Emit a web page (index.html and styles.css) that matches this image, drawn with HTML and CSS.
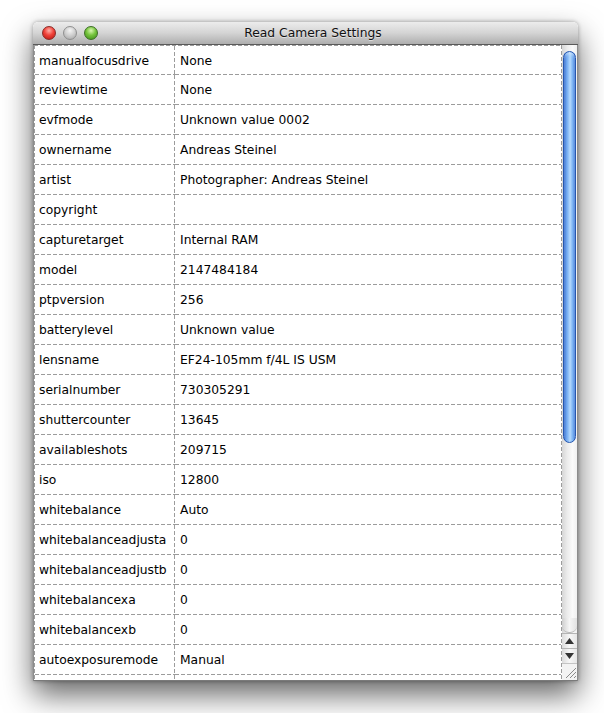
FILE: index.html
```html
<!DOCTYPE html>
<html>
<head>
<meta charset="utf-8">
<link rel="stylesheet" href="styles.css">
</head>
<body>
<div class="window">
  <div class="titlebar">
    <div class="lights">
      <span class="light red"></span>
      <span class="light gray"></span>
      <span class="light green"></span>
    </div>
    <div class="title">Read Camera Settings</div>
  </div>
  <div class="body">
    <div class="table">
      <div class="row"><div class="k">manualfocusdrive</div><div class="v">None</div></div>
      <div class="row"><div class="k">reviewtime</div><div class="v">None</div></div>
      <div class="row"><div class="k">evfmode</div><div class="v">Unknown value 0002</div></div>
      <div class="row"><div class="k">ownername</div><div class="v">Andreas Steinel</div></div>
      <div class="row"><div class="k">artist</div><div class="v">Photographer: Andreas Steinel</div></div>
      <div class="row"><div class="k">copyright</div><div class="v"></div></div>
      <div class="row"><div class="k">capturetarget</div><div class="v">Internal RAM</div></div>
      <div class="row"><div class="k">model</div><div class="v">2147484184</div></div>
      <div class="row"><div class="k">ptpversion</div><div class="v">256</div></div>
      <div class="row"><div class="k">batterylevel</div><div class="v">Unknown value</div></div>
      <div class="row"><div class="k">lensname</div><div class="v">EF24-105mm f/4L IS USM</div></div>
      <div class="row"><div class="k">serialnumber</div><div class="v">730305291</div></div>
      <div class="row"><div class="k">shuttercounter</div><div class="v">13645</div></div>
      <div class="row"><div class="k">availableshots</div><div class="v">209715</div></div>
      <div class="row"><div class="k">iso</div><div class="v">12800</div></div>
      <div class="row"><div class="k">whitebalance</div><div class="v">Auto</div></div>
      <div class="row"><div class="k">whitebalanceadjusta</div><div class="v">0</div></div>
      <div class="row"><div class="k">whitebalanceadjustb</div><div class="v">0</div></div>
      <div class="row"><div class="k">whitebalancexa</div><div class="v">0</div></div>
      <div class="row"><div class="k">whitebalancexb</div><div class="v">0</div></div>
      <div class="row"><div class="k">autoexposuremode</div><div class="v">Manual</div></div>
      <div class="row"><div class="k"></div><div class="v"></div></div>
    </div>
    <div class="scrollbar">
      <div class="track">
        <div class="thumb"></div>
        <div class="endcap"></div>
      </div>
      <div class="arrow up"><svg width="9" height="6" viewBox="0 0 9 6"><polygon points="4.5,0 9,6 0,6" fill="#333"/></svg></div>
      <div class="arrow down"><svg width="9" height="6" viewBox="0 0 9 6"><polygon points="0,0 9,0 4.5,6" fill="#333"/></svg></div>
      <div class="grip"><svg width="15" height="15" viewBox="0 0 15 15"><path d="M4 14 L14 4 M8 14 L14 8 M12 14 L14 12" stroke="#8a8a8a" stroke-width="1" fill="none"/></svg></div>
    </div>
  </div>
</div>
</body>
</html>
```

FILE: styles.css
```css
html, body {
  margin: 0;
  padding: 0;
  background: #fff;
}
body {
  font-family: "DejaVu Sans", "Liberation Sans", sans-serif;
  font-size: 12.3px;
  color: #000;
  min-height: 713px;
  padding-top: 22px;
  box-sizing: border-box;
}
.window {
  margin: 0 0 0 33px;
  width: 545px;
  height: 659px;
  border-radius: 5px 5px 0 0;
  box-shadow: 0 14px 30px rgba(0, 0, 0, 0.6), 0 0 4px rgba(0,0,0,0.35);
  display: flex;
  flex-direction: column;
  overflow: hidden;
  background: #fff;
}
.titlebar {
  height: 22px;
  flex: none;
  border-bottom: 1px solid #5a5a5a;
  background: linear-gradient(180deg, #ececec 0%, #d4d4d4 50%, #aeaeae 100%);
  display: flex;
  align-items: center;
  border-radius: 5px 5px 0 0;
}
.lights {
  display: flex;
  gap: 7px;
  padding-left: 9px;
  width: 56px;
  flex: none;
}
.light {
  width: 14px;
  height: 14px;
  border-radius: 50%;
  box-sizing: border-box;
}
.red {
  background: radial-gradient(circle at 50% 30%, #ffb0a8 0%, #f0433a 45%, #b3130d 100%);
  border: 1px solid #8b2a26;
}
.gray {
  background: radial-gradient(circle at 50% 30%, #f4f4f4 0%, #cdcdcd 50%, #a3a3a3 100%);
  border: 1px solid #8f8f8f;
}
.green {
  background: radial-gradient(circle at 50% 30%, #d9f7b0 0%, #76c43d 45%, #3b8a17 100%);
  border: 1px solid #3c6f24;
}
.title {
  flex: 1;
  text-align: center;
  padding-right: 50px;
  font-size: 12.3px;
  color: #111;
  text-shadow: 0 1px 0 rgba(255,255,255,0.5);
}
.body {
  flex: 1;
  display: flex;
  border-left: 1px solid #8c8c8c;
  border-right: 1px solid #8c8c8c;
  border-bottom: 1px solid #7a7a7a;
  overflow: hidden;
}
.table {
  width: 528px;
  flex: none;
  box-sizing: border-box;
  padding: 1px 1px 0 1px;
  background:
    repeating-linear-gradient(90deg, #9c9c9c 0 4px, transparent 4px 6px) left top / 100% 1px no-repeat,
    repeating-linear-gradient(180deg, #9c9c9c 0 4px, transparent 4px 6px) left top / 1px 100% no-repeat,
    repeating-linear-gradient(180deg, #9c9c9c 0 4px, transparent 4px 6px) right top / 1px 100% no-repeat;
  overflow: hidden;
}
.row {
  display: grid;
  grid-template-columns: 140px 386px;
  height: 30px;
  flex: none;
}
.row:first-child {
  height: 29px;
}
.k, .v {
  display: flex;
  align-items: center;
  white-space: nowrap;
  overflow: hidden;
  background: repeating-linear-gradient(90deg, #9c9c9c 0 4px, transparent 4px 6px) left bottom / 100% 1px no-repeat;
}
.k {
  padding-left: 4px;
  background:
    repeating-linear-gradient(90deg, #9c9c9c 0 4px, transparent 4px 6px) left bottom / 100% 1px no-repeat,
    repeating-linear-gradient(180deg, #9c9c9c 0 4px, transparent 4px 6px) right top / 1px 100% no-repeat;
}
.v {
  padding-left: 5px;
}
.scrollbar {
  width: 15px;
  flex: none;
  display: flex;
  flex-direction: column;
  background: linear-gradient(90deg, #d6d6d6 0%, #ececec 35%, #fafafa 70%, #f0f0f0 100%);
}
.track {
  flex: 1;
  padding-top: 6px;
  display: flex;
  flex-direction: column;
}
.thumb {
  height: 392px;
  margin: 0 1px 0 1px;
  border-radius: 7px;
  box-sizing: border-box;
  border: 1px solid #2457b0;
  background: linear-gradient(90deg, #2f66c9 0%, #6aa3ee 22%, #9cc9fa 45%, #b6dafd 55%, #77b0f2 80%, #3d74d2 100%);
  box-shadow: inset 0 2px 3px rgba(255,255,255,0.4);
}
.endcap {
  margin-top: auto;
  height: 14px;
  border-radius: 0 0 7px 7px;
  background: linear-gradient(90deg, #cfcfcf, #f6f6f6 50%, #e2e2e2);
  border-bottom: 1px solid #b8b8b8;
}
.arrow {
  height: 14px;
  border-top: 1px solid #b5b5b5;
  display: flex;
  align-items: center;
  justify-content: center;
  background: linear-gradient(90deg, #dcdcdc, #f7f7f7 50%, #e6e6e6);
}
.grip {
  height: 16px;
  border-top: 1px solid #c4c4c4;
  background: #f3f3f3;
  display: flex;
}
```
